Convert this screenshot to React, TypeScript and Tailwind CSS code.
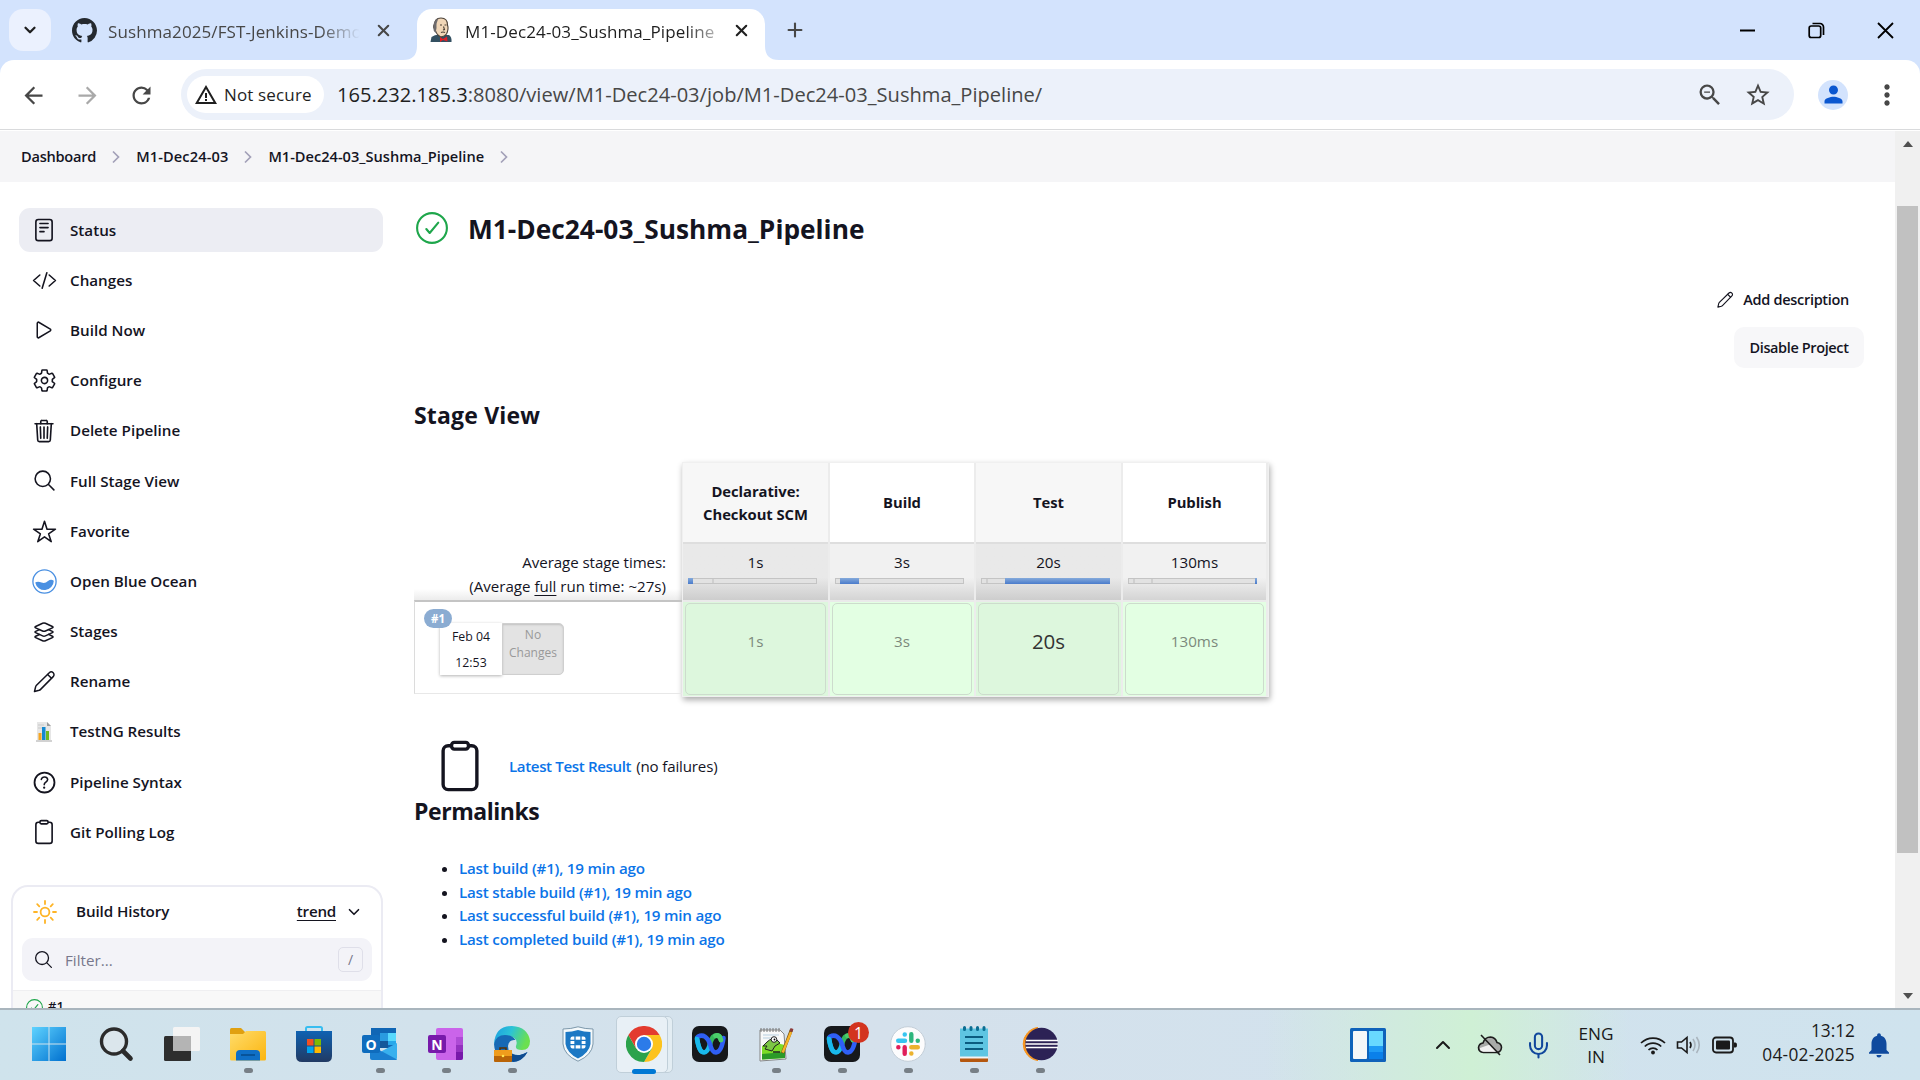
import React from "react";
import {
  IoCodeSlashOutline,
  IoPlayOutline,
  IoSettingsOutline,
  IoTrashOutline,
  IoSearchOutline,
  IoStarOutline,
  IoLayersOutline,
  IoHelpCircleOutline,
  IoClipboardOutline,
  IoReaderOutline,
} from "react-icons/io5";
import {
  MdArrowBack,
  MdArrowForward,
  MdRefresh,
  MdZoomOut,
  MdStarOutline,
  MdPerson,
  MdMoreVert,
  MdWarningAmber,
  MdNotifications,
} from "react-icons/md";
import { ChevronDown, ChevronUp, X, Plus, Mic } from "lucide-react";

/* ---------- small drawings ---------- */

function GithubMark() {
  return (
    <svg width="25" height="25" viewBox="0 0 16 16" fill="#24292f" className="shrink-0">
      <path d="M8 0C3.58 0 0 3.58 0 8c0 3.54 2.29 6.53 5.47 7.59.4.07.55-.17.55-.38 0-.19-.01-.82-.01-1.49-2.01.37-2.53-.49-2.69-.94-.09-.23-.48-.94-.82-1.13-.28-.15-.68-.52-.01-.53.63-.01 1.08.58 1.23.82.72 1.21 1.87.87 2.33.66.07-.52.28-.87.51-1.07-1.78-.2-3.64-.89-3.64-3.95 0-.87.31-1.59.82-2.15-.08-.2-.36-1.02.08-2.12 0 0 .67-.21 2.2.82.64-.18 1.32-.27 2-.27s1.36.09 2 .27c1.53-1.04 2.2-.82 2.2-.82.44 1.1.16 1.92.08 2.12.51.56.82 1.27.82 2.15 0 3.07-1.87 3.75-3.65 3.95.29.25.54.73.54 1.48 0 1.07-.01 1.93-.01 2.2 0 .21.15.46.55.38A8.01 8.01 0 0 0 16 8c0-4.42-3.58-8-8-8z" />
    </svg>
  );
}

function Butler() {
  return (
    <svg width="24" height="26" viewBox="0 0 24 26">
      <path d="M1.500 25 L2.500 20 Q7 17 12 18 L20 18 Q23 20 22.500 25 Z" fill="#335061" />
      <path d="M6 8 Q5 1 12 1 Q18.500 1 18.500 8 Q20 12 17.500 17 Q15 20.500 11 19.500 Q7 17 6 12 Q4 11 5 8Z" fill="#f0d6b7" stroke="#4b4036" strokeWidth="1.1" />
      <path d="M4.500 12 Q3.500 3 10 1 Q7 5 7.500 11 Q6.500 14 7.500 16 Q4.500 15 4.500 12Z" fill="#6d6b6d" />
      <path d="M11 8h2M15.500 8h2M14.500 9.500 l1 3 -1.500 .4M12 15.500 q2 -1 4 0" stroke="#4b4036" strokeWidth="1.100" fill="none" />
      <path d="M11 20 L14 22 L18 19.500 L18.500 24.500 L14 23 L11 25Z" fill="#e01e26" />
    </svg>
  );
}

function Pencil({ size }: { size: number }) {
  return (
    <svg width={size} height={size} viewBox="0 0 24 24" fill="none" stroke="#14141f" strokeWidth="1.5" strokeLinejoin="round" strokeLinecap="round">
      <path d="M2.500 21.500 L3.600 16.800 Q3.800 16 4.500 15.300 L17.300 2.700 A2.600 2.600 0 0 1 21.200 6.600 L8.600 19.400 Q8 20 7.100 20.300 Z" />
      <path d="M15.600 4.500 L19.500 8.300" />
    </svg>
  );
}

function BlueOcean() {
  return (
    <svg width="25" height="25" viewBox="0 0 25 25">
      <circle cx="12.500" cy="12.500" r="11.600" fill="#fff" stroke="#4a90e2" strokeWidth="1.300" />
      <path d="M3.200 13.500 Q6 12 9.500 13.600 Q13 15 16 12 Q19 9.800 21.800 11.800 A9.400 9.400 0 0 1 3.200 13.500Z" fill="#4a90e2" />
    </svg>
  );
}

function TestNg() {
  return (
    <svg width="18" height="22" viewBox="0 0 18 22">
      <path d="M2 1 H12 L16 5 V20 H2Z" fill="#e6e6e6" />
      <path d="M1 19h16v2H1z" fill="#d2d2d2" />
      <path d="M12 1 L16 5 H12Z" fill="#9b9b9b" />
      <path d="M3 4h6M3 7h5" stroke="#c8c8c8" />
      <path d="M3.500 12h3v7h-3z" fill="#f5a623" />
      <path d="M7 6h3.500v13H7z" fill="#1389d1" />
      <path d="M11 10h3v9h-3z" fill="#6fb91f" />
    </svg>
  );
}

function CheckRing({ size }: { size: number }) {
  return (
    <svg width={size} height={size} viewBox="0 0 32 32" fill="none" stroke="#1ea64b" strokeLinecap="round" strokeLinejoin="round" strokeWidth="2.1">
      <circle cx="16" cy="16" r="14.900" />
      <path d="M10.300 17 L13.700 21 L22.300 10.700" />
    </svg>
  );
}

function Sun() {
  return (
    <svg width="24" height="24" viewBox="0 0 24 24" fill="none" stroke="#feb426" strokeWidth="1.800" strokeLinecap="round">
      <circle cx="12" cy="12" r="4.400" />
      <path d="M12 1v3M12 20v3M1 12h3M20 12h3M4.200 4.200l2.100 2.100M17.700 17.700l2.100 2.100M4.200 19.800l2.100-2.100M17.700 6.300l2.100-2.100" />
    </svg>
  );
}

/* ---------- browser chrome ---------- */

function TabStrip() {
  return (
    <div className="flex h-[60px] bg-[#d3e3fd] text-[17px] text-[#474747]">
      <div className="mt-[9px] ml-[9px] flex h-[42px] w-[42px] items-center justify-center rounded-[14px] bg-[#ebf1fe] text-[#1f1f1f]">
        <ChevronDown size={18} strokeWidth={3} />
      </div>
      <div className="ml-[21px] flex w-[331px] items-center">
        <GithubMark />
        <div className="mt-[3px] ml-[11px] w-[252px] overflow-hidden whitespace-nowrap tracking-[0.1px] [mask-image:linear-gradient(90deg,#000_84%,transparent_100%)]">
          Sushma2025/FST-Jenkins-Demo
        </div>
        <X size={19} strokeWidth={2.6} className="ml-[14px] shrink-0" />
      </div>
      <svg width="14" height="60" viewBox="0 0 14 60">
        <path d="M0 60 Q14 60 14 46 V60Z" fill="#fff" />
      </svg>
      <div className="mt-[9px] flex h-[51px] w-[348px] items-center rounded-t-[15px] bg-white pb-[9px] pl-[12px] text-[#1f1f1f]">
        <Butler />
        <div className="mt-[3px] ml-[12px] w-[250px] overflow-hidden whitespace-nowrap tracking-[0.12px] [mask-image:linear-gradient(90deg,#000_88%,transparent_106%)]">
          M1-Dec24-03_Sushma_Pipeline
        </div>
        <X size={19} strokeWidth={2.6} className="ml-[17px] shrink-0" />
      </div>
      <svg width="14" height="60" viewBox="0 0 14 60">
        <path d="M14 60 Q0 60 0 46 V60Z" fill="#fff" />
      </svg>
      <div className="flex w-[32px] items-center justify-center">
        <Plus size={22} strokeWidth={2.3} />
      </div>
      <div className="ml-auto flex items-center gap-[52px] pr-[26px] text-black">
        <svg width="17" height="17" viewBox="0 0 17 17"><path d="M1 8.500h15" stroke="#000" strokeWidth="2" /></svg>
        <svg width="17" height="17" viewBox="0 0 17 17" fill="none" stroke="#000" strokeWidth="1.700">
          <rect x="1.200" y="4" width="11.500" height="11.500" rx="2" />
          <path d="M4.500 1.500H12a3.500 3.500 0 0 1 3.500 3.500v8" />
        </svg>
        <svg width="17" height="17" viewBox="0 0 17 17"><path d="M1 1l15 15M16 1L1 16" stroke="#000" strokeWidth="1.800" /></svg>
      </div>
    </div>
  );
}

function Toolbar() {
  return (
    <div className="h-[71px] bg-linear-to-b from-[#d3e3fd] from-50% to-white to-50%">
      <div className="flex h-[70px] items-center rounded-t-[14px] border-b border-[#d9dadc] bg-white text-[#474747]">
        <div className="flex w-[181px] items-center gap-[27px] pt-[1px] pl-[20px]">
          <MdArrowBack size={27} />
          <MdArrowForward size={27} color="#a9a9a9" />
          <MdRefresh size={27} />
        </div>
        <div className="flex h-[51px] w-[1613px] items-center rounded-full bg-[#ecf1fa] pl-[6px]">
          <div className="flex h-[37px] w-[137px] items-center rounded-full bg-white pl-[7px] text-[#1f1f1f]">
            <MdWarningAmber size={24} />
            <span className="ml-[6px] text-[17px] font-medium tracking-[0.15px]">Not secure</span>
          </div>
          <div className="ml-[13px] pt-[2px] text-[20.1px] whitespace-nowrap">
            <span className="text-[#1f1f1f]">165.232.185.3</span>:8080/view/M1-Dec24-03/job/M1-Dec24-03_Sushma_Pipeline/
          </div>
          <MdZoomOut size={28} className="mr-[20px] ml-auto" />
          <MdStarOutline size={28} className="mr-[22px]" />
        </div>
        <div className="ml-[24px] flex h-[30px] w-[30px] items-center justify-center rounded-full bg-[#d3e3fd]">
          <MdPerson size={27} color="#0b57d0" />
        </div>
        <MdMoreVert size={32} className="ml-[23px]" />
      </div>
    </div>
  );
}

/* ---------- page ---------- */

function Crumb({ text, spacing }: { text: string; spacing: string }) {
  return (
    <>
      <span className={spacing}>{text}</span>
      <svg width="40" height="14" viewBox="0 0 40 14" fill="none" stroke="#a2a0b8" strokeWidth="1.700">
        <path d="M17 1.500L22.500 7L17 12.500" />
      </svg>
    </>
  );
}

const items: { label: string; icon: React.ReactNode }[] = [
  { label: "Status", icon: <IoReaderOutline size={26} /> },
  { label: "Changes", icon: <IoCodeSlashOutline size={25} /> },
  { label: "Build Now", icon: <IoPlayOutline size={24} /> },
  { label: "Configure", icon: <IoSettingsOutline size={25} /> },
  { label: "Delete Pipeline", icon: <IoTrashOutline size={26} /> },
  { label: "Full Stage View", icon: <IoSearchOutline size={25} /> },
  { label: "Favorite", icon: <IoStarOutline size={25} /> },
  { label: "Open Blue Ocean", icon: <BlueOcean /> },
  { label: "Stages", icon: <IoLayersOutline size={24} /> },
  { label: "Rename", icon: <Pencil size={24} /> },
  { label: "TestNG Results", icon: <TestNg /> },
  { label: "Pipeline Syntax", icon: <IoHelpCircleOutline size={29} /> },
  { label: "Git Polling Log", icon: <IoClipboardOutline size={26} /> },
];

function Sidebar() {
  return (
    <div className="w-[414px] shrink-0 pt-[26px]">
      <div className="ml-[19px] flex w-[364px] flex-col gap-[6.2px]">
        {items.map((it, i) => (
          <div
            key={it.label}
            className={"flex h-[44px] shrink-0 items-center rounded-[11px] text-[15.2px] font-semibold " + (i === 0 ? "bg-[#ecedf3]" : "")}
          >
            <span className="mr-px flex w-[50px] justify-center">{it.icon}</span>
            {it.label}
          </div>
        ))}
      </div>
      <div className="mt-[31px] ml-[11px] h-[180px] w-[372px] rounded-[17px] border-2 border-[#ebebf3]">
        <div className="flex h-[50px] items-center pb-px pl-[20px] text-[15.2px] font-semibold tracking-[-0.1px]">
          <Sun />
          <span className="ml-[19px]">Build History</span>
          <span className="ml-auto tracking-[-0.25px] underline decoration-1 underline-offset-[3px]">trend</span>
          <ChevronDown size={18} className="mr-[18px] ml-[9px]" strokeWidth={2.2} />
        </div>
        <div className="mx-[9px] mt-px flex h-[43px] items-center rounded-[11px] bg-[#f3f3f8] pr-[9px] pl-[11px] text-[15.2px] font-medium text-[#78788c]">
          <IoSearchOutline size={21} color="#14141f" />
          <span className="ml-[11px] pt-px">Filter...</span>
          <span className="ml-auto flex h-[25px] w-[25px] items-center justify-center rounded-[5px] border border-[#dfdfe9] text-[14px] font-normal">/</span>
        </div>
        <div className="mt-[9px] flex h-[60px] border-t border-[#efeff1] bg-[#f8f8f8] pt-[8px] pl-[13px] text-[13px] font-semibold">
          <CheckRing size={17} />
          <span className="ml-[5px] leading-[15px]">#1</span>
        </div>
      </div>
    </div>
  );
}

const stages = [
  { name: "Declarative: Checkout SCM", time: "1s", start: 0, width: 5, ticks: [23] },
  { name: "Build", time: "3s", start: 5, width: 19, ticks: [] },
  { name: "Test", time: "20s", start: 24, width: 105, ticks: [4] },
  { name: "Publish", time: "130ms", start: 127, width: 2, ticks: [4, 22] },
];

function StageView() {
  return (
    <div className="flex h-[236px] items-start">
      <div className="flex w-[268px] flex-col">
        <div className="mt-[82px] h-[56px] bg-linear-to-b from-white from-80% to-[#ececec] pt-[7px] pr-[16px] text-right text-[15.1px] leading-[23.7px]">
          <span className="tracking-[-0.07px]">Average stage times:</span>
          <br />
          (Average <span className="underline underline-offset-[3px]">full</span> run time: ~27s)
        </div>
        <div className="relative h-[94px] border-t-2 border-b border-l border-t-[#c4c4c4] border-b-[#e8e8e8] border-l-[#dcdcdc]">
          <div className="mt-[21px] ml-[25px] flex h-[52px] text-center">
            <div className="w-[62px] bg-white pt-px text-[12.3px] leading-[26px] shadow-[0_1px_3px_rgba(0,0,0,0.3)]">
              Feb 04
              <br />
              12:53
            </div>
            <div className="w-[62px] rounded-r-[5px] border border-[#cfcfcf] bg-[#e3e3e3] pt-[2px] text-[12px] leading-[18px] text-[#999] shadow-[inset_0_1px_2px_rgba(0,0,0,0.15)]">
              No
              <br />
              Changes
            </div>
          </div>
          <div className="absolute top-[7px] left-[9px] flex h-[19px] w-[28px] items-center justify-center rounded-full bg-[#8bacd2] text-[11.5px] font-bold text-white">
            #1
          </div>
        </div>
      </div>
      <div className="grid w-[587px] grid-cols-[147px_146px_147px_145px] border border-[#f0f0f0] bg-white shadow-[1px_3px_6px_rgba(0,0,0,0.33)]">
        {stages.map((s, i) => (
          <div key={s.name} className={"flex flex-col border-r-2 border-[#ececec] text-center text-[15.2px] " + (i % 2 === 0 ? "bg-[#f7f7f7]" : "bg-white")}>
            <div className="flex h-[79px] items-center justify-center px-[15px] text-[14.8px] leading-[23px] font-bold tracking-[-0.05px]">{s.name}</div>
            <div className={"h-[58px] border-t-2 border-[#dedede] bg-linear-to-b from-60% pt-[7px] " + (i % 2 === 0 ? "from-[#e9e9e9] to-[#cdcdcd]" : "from-[#f1f1f1] to-[#d4d4d4]")}>
              <div className="leading-[23px]">{s.time}</div>
              <div className="relative mt-[4px] ml-[5px] h-[6px] w-[129px] border border-[#c4c4c4] bg-[#e2e2e2]">
                {s.ticks.map((t) => (
                  <div key={t} className="absolute top-0 h-[4px] w-[2px] bg-[#cfcfcf]" style={{ left: t }} />
                ))}
                <div className="absolute -top-px h-[6px] bg-linear-to-b from-[#85aadb] to-[#4a7bcb]" style={{ left: s.start - 1, width: s.width }} />
              </div>
            </div>
            <div className={"border-t-2 border-[#eaeaea] px-[2px] pt-px pb-px " + (i % 2 === 0 ? "bg-[#ddf7dd]" : "bg-[#e3ffe3]")}>
              <div
                className={
                  "flex h-[92px] items-center justify-center rounded-[5px] border border-[#cddccd] pb-[15px] " +
                  (i === 2 ? "text-[20.5px] text-[#333]" : "text-[15.2px] text-[#7c897c]")
                }
              >
                {s.time}
              </div>
            </div>
          </div>
        ))}
      </div>
    </div>
  );
}

const links = [
  "Last build (#1), 19 min ago",
  "Last stable build (#1), 19 min ago",
  "Last successful build (#1), 19 min ago",
  "Last completed build (#1), 19 min ago",
];

function Main() {
  return (
    <div className="flex flex-1 flex-col">
      <div className="flex h-[93px] items-center pl-[2px]">
        <div className="-mt-px">
          <CheckRing size={32} />
        </div>
        <h1 className="mt-[2px] ml-[20px] text-[26.3px] font-bold">M1-Dec24-03_Sushma_Pipeline</h1>
      </div>
      <div className="flex h-[47px] items-center justify-end pt-[2px] pr-[46px] text-[14.5px] font-semibold tracking-[-0.3px]">
        <Pencil size={18} />
        <span className="ml-[9px] pt-px">Add description</span>
      </div>
      <div className="mt-[5px] mr-[31px] flex h-[41px] w-[130px] items-center justify-center self-end rounded-[10px] bg-[#f7f7f9] text-[14.5px] font-semibold tracking-[-0.38px]">
        Disable Project
      </div>
      <h2 className="mt-[28px] h-[38px] text-[23px] leading-[39px] font-bold tracking-[0.18px]">Stage View</h2>
      <div className="mt-[28px]">
        <StageView />
      </div>
      <div className="mt-[38px] flex h-[59px] items-center pl-[19px] text-[15.1px]">
        <IoClipboardOutline size={54} />
        <span className="ml-[22px] pt-[2px] font-semibold tracking-[-0.37px] text-[#0b74e8]">Latest Test Result</span>
        <span className="ml-[5px] pt-[2px] tracking-[-0.15px]">(no failures)</span>
      </div>
      <h2 className="h-[34px] text-[23px] leading-[32px] font-bold tracking-[-0.45px]">Permalinks</h2>
      <ul className="mt-[28px] list-disc pl-[45px] text-[15.2px] leading-[23.7px] tracking-[-0.22px]">
        {links.map((l) => (
          <li key={l}>
            <span className="font-semibold text-[#0b74e8]">{l}</span>
          </li>
        ))}
      </ul>
    </div>
  );
}

/* ---------- taskbar ---------- */

function Windows() {
  return (
    <svg width="36" height="36" viewBox="0 0 36 36" className="mr-[3px]">
      <defs>
        <linearGradient id="win" x1="0" y1="0" x2="1" y2="1">
          <stop offset="0" stopColor="#5fd3ff" />
          <stop offset="1" stopColor="#0070cf" />
        </linearGradient>
      </defs>
      <path d="M1 1h16.500v16.500H1zM18.500 1H35v16.500H18.500zM1 18.500h16.500V35H1zM18.500 18.500H35V35H18.500z" fill="url(#win)" />
    </svg>
  );
}

function SearchGlass() {
  return (
    <svg width="36" height="36" viewBox="0 0 36 36" fill="none" stroke="#2b2b2b">
      <circle cx="16" cy="15.500" r="12.500" strokeWidth="3.400" fill="#dbe6ec" />
      <path d="M25 25l7.500 7.500" strokeWidth="4.600" strokeLinecap="round" />
    </svg>
  );
}

function TaskView() {
  return (
    <svg width="36" height="36" viewBox="0 0 36 36">
      <rect x="0" y="10" width="27" height="25" rx="1.500" fill="#2e2e2e" />
      <rect x="9" y="1" width="27" height="24" rx="1.500" fill="#f4f4f4" />
      <path d="M9 10h18v15H10.500a1.500 1.500 0 0 1-1.500-1.500z" fill="#b4b4b4" />
    </svg>
  );
}

function Folder() {
  return (
    <svg width="36" height="36" viewBox="0 0 36 36">
      <defs>
        <linearGradient id="folder" x1="0" y1="0" x2="1" y2="1">
          <stop offset="0" stopColor="#ffdc6b" />
          <stop offset="1" stopColor="#fbb50f" />
        </linearGradient>
      </defs>
      <path d="M0 3.500Q0 2 1.500 2H11l4 4v6H0z" fill="#e0a010" />
      <path d="M0 8h13l3-3h18.500Q36 5 36 6.500V33q0 1.500-1.500 1.500h-33Q0 34.500 0 33z" fill="url(#folder)" />
      <path d="M6 34.500V28q0-4 4-4h16q4 0 4 4v6.500z" fill="#0f6fc6" />
      <path d="M11 29h14" stroke="#064a8a" strokeWidth="1.500" />
    </svg>
  );
}

function Store() {
  return (
    <svg width="36" height="36" viewBox="0 0 36 36">
      <defs>
        <linearGradient id="store" x1="0" y1="0" x2="0" y2="1">
          <stop offset="0" stopColor="#0f62b2" />
          <stop offset="1" stopColor="#213a63" />
        </linearGradient>
      </defs>
      <path d="M10 7V2.500Q10 1 11.500 1h13Q26 1 26 2.500V7" fill="none" stroke="#38bdf0" strokeWidth="2" />
      <path d="M0 5h36v25q0 6-6 6H6q-6 0-6-6z" fill="url(#store)" />
      <path d="M11 13h6.500v6.500H11z" fill="#f25022" />
      <path d="M18.500 13H25v6.500h-6.500z" fill="#7fba00" />
      <path d="M11 20.500h6.500V27H11z" fill="#00a4ef" />
      <path d="M18.500 20.500H25V27h-6.500z" fill="#ffb900" />
    </svg>
  );
}

function Outlook() {
  return (
    <div className="relative h-[36px] w-[36px]">
      <svg width="36" height="36" viewBox="0 0 36 36">
        <path d="M9 2h25v20H9z" fill="#1066b5" />
        <path d="M18 7h8v8h-8z" fill="#2a9be0" />
        <path d="M26 7h8v8h-8z" fill="#58d9fd" />
        <path d="M18 15h8v7h-8z" fill="#14579a" />
        <path d="M26 15h8v4h-8z" fill="#28a8ea" />
        <path d="M35 17L20 25V34H33q2 0 2-2z" fill="#38b0ee" />
        <path d="M8 19l27 14.500Q34.500 34 33 34H10q-2 0-2-2z" fill="#1a7fd0" />
      </svg>
      <div className="absolute top-[9px] left-0 flex h-[18px] w-[18px] items-center justify-center rounded-[2px] bg-[#0f6cbd] text-[14px] font-bold text-white">O</div>
    </div>
  );
}

function OneNote() {
  return (
    <div className="relative h-[36px] w-[36px]">
      <svg width="36" height="36" viewBox="0 0 36 36">
        <rect x="8" y="2" width="27" height="32" rx="2" fill="#ca64ea" />
        <path d="M28 11h7v8h-7z" fill="#ae4bd5" />
        <path d="M28 19h7v7h-7z" fill="#9332bf" />
        <path d="M28 26h7v6q0 2-2 2h-5z" fill="#7719aa" />
      </svg>
      <div className="absolute top-[9px] left-0 flex h-[18px] w-[18px] items-center justify-center rounded-[2px] bg-[#7719aa] text-[14px] font-bold text-white">N</div>
    </div>
  );
}

function Edge() {
  return (
    <svg width="36" height="36" viewBox="0 0 36 36">
      <defs>
        <linearGradient id="edge" x1="0" y1="0" x2="1" y2="0.300">
          <stop offset="0" stopColor="#1b9de2" />
          <stop offset="0.500" stopColor="#2cc3d6" />
          <stop offset="1" stopColor="#6be04f" />
        </linearGradient>
      </defs>
      <path d="M0 18Q1 0 18 0Q34 1 36 15Q36 24 28 24Q21 24 22 20Q25 12 15 10Q6 9 0 18Z" fill="url(#edge)" />
      <path d="M0 18Q2 9 11 9Q18 9 21.500 14Q15 13 14 20Q14 30 26 29Q30 28 33.500 26Q28 36 18 36Q1 35 0 18Z" fill="#1769b5" />
      <path d="M15 25Q19 30 26 29Q30 28 33.500 26Q29 35 19 36Q15 32 15 25Z" fill="#0f4b8f" />
      <rect x="0" y="24" width="18" height="12" rx="1" fill="#b96407" />
      <path d="M0 25q0-1 1-1h16q1 0 1 1v5H0z" fill="#f09c1c" />
      <path d="M6 24v-2h6v2" stroke="#5a3000" fill="none" strokeWidth="1.500" />
      <circle cx="9" cy="30" r="1.300" fill="#ffe34d" />
    </svg>
  );
}

function Shield() {
  return (
    <svg width="32" height="36" viewBox="0 0 32 36">
      <path d="M16 .8Q23 3 31 3V18Q30 29 16 35.200Q2 29 1 18V3Q9 3 16 .8Z" fill="#f5fafc" stroke="#7d98ab" />
      <path d="M16 4Q22 6 28.500 6V18Q27 27 16 32.500Q5 27 3.500 18V6Q10 6 16 4Z" fill="#1c78c4" />
      <rect x="8.500" y="10.500" width="15" height="12" rx="2" fill="#fff" />
      <path d="M13 10v4M13 19v4M19 10v4M19 19v4M8 14.300h5M19 14.300h5M8 18.700h5M19 18.700h5M13 14.300h6v4.400h-6z" stroke="#1c78c4" strokeWidth="1.300" fill="#1c78c4" />
    </svg>
  );
}

function Chrome() {
  return (
    <svg width="36" height="36" viewBox="0 0 36 36">
      <path d="M18 9H33.600A18 18 0 0 1 18 36L25.800 22.500z" fill="#fcc31e" />
      <path d="M10.200 22.500L2.400 9A18 18 0 0 0 18 36L25.800 22.500z" fill="#2ba24c" />
      <path d="M18 9H33.600A18 18 0 0 0 2.400 9L10.200 22.500z" fill="#e33b2e" />
      <circle cx="18" cy="18" r="9" fill="#fff" />
      <circle cx="18" cy="18" r="7.200" fill="#2c7be9" />
    </svg>
  );
}

function Webex() {
  return (
    <svg width="36" height="36" viewBox="0 0 36 36" fill="none" strokeLinecap="round">
      <rect width="36" height="36" rx="7" fill="#16181b" />
      <path d="M5 12Q7 26.500 12 26.500Q16 26 18 18" stroke="#19b9ec" strokeWidth="4.600" />
      <path d="M18 18Q20 9.500 24.500 9.500Q28 9.500 29 14" stroke="#35b85c" strokeWidth="4.800" />
      <path d="M6 10.500Q14 7 18 18Q20 26.500 24 26.500Q29.500 26 31.500 12" stroke="#2f5ff5" strokeWidth="4.600" />
      <path d="M23.500 9.700Q28 8.500 29 14" stroke="#4bce6a" strokeWidth="4.800" />
      <path d="M5 13Q6.500 22 9 25" stroke="#19b9ec" strokeWidth="4.600" />
    </svg>
  );
}

function NotepadPlus() {
  return (
    <svg width="36" height="36" viewBox="0 0 36 36">
      <path d="M2 4h20l4 4 2 25-26 2z" fill="#f8f8f8" stroke="#858585" />
      <path d="M3 2v4M6 2v4M9 2v4M12 2v4M15 2v4M18 2v4M21 2v4" stroke="#777" />
      <path d="M5 9h16M5 12h12" stroke="#b7cfe0" />
      <path d="M4 20Q14 15 27 19V32L4 33.500z" fill="#7ddc28" />
      <path d="M4 28l23-2v6L4 33.500z" fill="#2c9a28" />
      <path d="M9 16q5-5 10-2l3 3-5 3-3 5-7-2 2-3-4 0z" fill="#7cc644" stroke="#222" />
      <circle cx="16" cy="13.500" r="2.800" fill="#fff" stroke="#222" />
      <circle cx="16.500" cy="13.500" r=".9" fill="#000" />
      <path d="M24.500 27L33.500 3.500" stroke="#7a5010" strokeWidth="3.200" />
      <path d="M24.700 26.500L33 6" stroke="#f5b32a" strokeWidth="2.400" />
      <path d="M33 5.500L34 2.500" stroke="#8c3b3b" strokeWidth="3" />
      <path d="M15 26l7 0" stroke="#222" strokeWidth="1.500" />
    </svg>
  );
}

function Slack() {
  return (
    <svg width="36" height="36" viewBox="0 0 36 36" strokeWidth="4.400" strokeLinecap="round">
      <circle cx="18" cy="18" r="17.300" fill="#fcfcfd" stroke="#c3ced8" strokeWidth="1" />
      <path d="M8.200 14.700H15M14.700 8.500h.1" stroke="#36c5f0" />
      <path d="M21.300 8.200V14.700M27.700 14.700h.1" stroke="#2eb67d" />
      <path d="M21.300 21.300H27.800M21.300 27.500h.1" stroke="#ecb22e" />
      <path d="M14.700 21.300V27.800M8.300 21.300h.1" stroke="#e01e5a" />
    </svg>
  );
}

function Notepad() {
  return (
    <svg width="28" height="36" viewBox="0 0 28 36">
      <path d="M0 31h28v4q0 1-1 1H1q-1 0-1-1z" fill="#b4570f" />
      <path d="M0 30h28v2.500H0z" fill="#f3f3f3" />
      <rect y="2.500" width="28" height="28" fill="#5ec5e2" />
      <path d="M5 11h18M5 17h18M5 23h18" stroke="#0b5c80" strokeWidth="2" />
      <path d="M4.500 1.500v2M11 1.500v2M17.500 1.500v2M24 1.500v2" stroke="#0b6d92" strokeWidth="3" strokeLinecap="round" />
    </svg>
  );
}

function Eclipse() {
  return (
    <svg width="36" height="36" viewBox="0 0 36 36">
      <path d="M16 1.500A16.600 16.600 0 0 0 16 34.500A18 18 0 0 1 16 1.500Z" fill="#f7941e" stroke="#f7941e" />
      <circle cx="19.500" cy="18" r="16.200" fill="#2c2255" />
      <path d="M4 14.500h32M3.500 18h32.500M4 21.500h32" stroke="#fff" strokeWidth="1.600" />
    </svg>
  );
}

const apps: { icon: React.ReactNode; dot?: boolean; active?: boolean; badge?: string }[] = [
  { icon: <Windows /> },
  { icon: <SearchGlass /> },
  { icon: <TaskView /> },
  { icon: <Folder />, dot: true },
  { icon: <Store /> },
  { icon: <Outlook />, dot: true },
  { icon: <OneNote />, dot: true },
  { icon: <Edge />, dot: true },
  { icon: <Shield /> },
  { icon: <Chrome />, active: true },
  { icon: <Webex /> },
  { icon: <NotepadPlus />, dot: true },
  { icon: <Webex />, dot: true, badge: "1" },
  { icon: <Slack />, dot: true },
  { icon: <Notepad />, dot: true },
  { icon: <Eclipse />, dot: true },
];

function Tray() {
  return (
    <div className="flex items-center text-[#1a1a1a]">
      <svg width="36" height="34" viewBox="0 0 36 34">
        <rect width="36" height="34" rx="1.500" fill="#0f62ba" />
        <rect x="3" y="3" width="14" height="28" rx="1" fill="#f5f6f8" />
        <path d="M19 3h14v15H19z" fill="#68d9ff" />
        <path d="M19 18h14v6H19z" fill="#1e9bf5" />
        <path d="M19 24h14v7H19z" fill="#0a80ea" />
      </svg>
      <ChevronUp size={24} className="ml-[45px]" strokeWidth={2} />
      <svg width="26" height="22" viewBox="0 0 26 22" className="ml-[22px]" fill="none" stroke="#1c1c1c" strokeWidth="1.600">
        <path d="M6.500 18.500Q1.500 18 1.500 13.500Q2 9.500 6 9Q8 3 13.500 3Q18.500 3.500 20 8.500Q24.500 9.500 24.500 13.500Q24 18 20 18.500Z" fill="#a9aba9" />
        <path d="M6.500 17.700Q2.500 17 3 14L13 10.500L20 17.700Z" fill="#f2f2f2" stroke="none" />
        <path d="M4 1l19 20" />
      </svg>
      <Mic size={29} className="ml-[21px]" color="#10479c" strokeWidth={1.7} />
      <div className="ml-[19px] w-[48px] text-center text-[17.2px] leading-[23px]">
        ENG
        <br />
        IN
      </div>
      <svg width="26" height="20" viewBox="0 0 26 20" className="ml-[20px]" fill="none" stroke="#1a1a1a" strokeWidth="1.700">
        <path d="M1 8A17 17 0 0 1 25 8M4.800 11.500A11.500 11.500 0 0 1 21.200 11.500M8.500 15A6.300 6.300 0 0 1 17.500 15" />
        <circle cx="13" cy="17.500" r="1.900" fill="#1a1a1a" stroke="none" />
      </svg>
      <svg width="26" height="20" viewBox="0 0 26 20" className="ml-[10px]" fill="none" stroke="#1a1a1a" strokeWidth="1.600">
        <path d="M1.500 7H5.500L11 2.500V17.500L5.500 13H1.500z" />
        <path d="M14 7Q16 10 14 13" />
        <path d="M17 4Q21 10 17 16M20.500 2Q26 10 20.500 18" stroke="#a9b4bd" />
      </svg>
      <svg width="26" height="18" viewBox="0 0 26 18" className="ml-[10px]">
        <rect x="1" y="1.500" width="20" height="15" rx="3" fill="none" stroke="#1a1a1a" strokeWidth="1.800" />
        <rect x="4" y="4.500" width="14" height="9" rx="1" fill="#1a1a1a" />
        <path d="M22 6.500h1.500q1.500 0 1.500 2.500t-1.500 2.500H22z" fill="#1a1a1a" />
      </svg>
      <div className="ml-[18px] w-[99px] pb-[4px] text-right text-[17.3px] leading-[24px] whitespace-nowrap">
        13:12
        <br />
        <span className="tracking-[0.25px]">04-02-2025</span>
      </div>
      <MdNotifications size={30} color="#0f4a9e" className="mr-[26px] ml-[9px]" />
    </div>
  );
}

function Taskbar() {
  return (
    <div className="flex h-[72px] justify-between border-t-2 border-[#a9b5bd] bg-linear-to-r from-[#cfe3ec] from-0% via-[#d5e1ec] via-45% to-[#cfe3ee]">
      <div className="flex pl-[17px]">
        {apps.map((a, i) => (
          <div key={i} className="relative flex w-[66px] items-center justify-center">
            {a.active && (
              <>
                <div className="absolute top-[6px] left-[7px] h-[57px] w-[55px] rounded-[5px] border border-[#c0cfd9] bg-[#e3edf3]" />
                <div className="absolute top-[6px] left-[5px] h-[57px] w-[52px] rounded-[5px] border border-[#c0cfd9] bg-[#e8f0f6]" />
                <div className="absolute top-[59px] left-[21px] h-[5px] w-[24px] rounded-full bg-[#0078d4]" />
              </>
            )}
            <div className={"relative " + (a.active ? "mr-[6px] -translate-y-px pl-[6px]" : "-translate-y-px")}>{a.icon}</div>
            {a.dot && <div className="absolute top-[58px] h-[5px] w-[9px] rounded-full bg-[#777f86]" />}
            {a.badge && (
              <div className="absolute top-[12px] right-[6px] flex h-[21px] w-[21px] items-center justify-center rounded-full bg-[#d3341f] text-[16px] text-white">
                {a.badge}
              </div>
            )}
          </div>
        ))}
      </div>
      <div className="flex bg-linear-to-r from-transparent from-5% via-[#cff0d5] via-35% to-transparent to-58% pl-[120px]">
        <Tray />
      </div>
    </div>
  );
}

export default function App() {
  return (
    <div className="flex h-[1080px] w-[1920px] flex-col overflow-hidden bg-white font-['Open_Sans','Noto_Sans',sans-serif] text-[#14141f]">
      <TabStrip />
      <Toolbar />
      <div className="flex h-[877px] overflow-hidden">
        <div className="flex w-[1895px] flex-col">
          <div className="flex h-[51px] shrink-0 items-center bg-[#f5f5f7] pl-[21px] text-[14.6px] font-semibold">
            <Crumb text="Dashboard" spacing="tracking-[-0.25px]" />
            <Crumb text="M1-Dec24-03" spacing="tracking-[0.12px]" />
            <Crumb text="M1-Dec24-03_Sushma_Pipeline" spacing="tracking-[0px]" />
          </div>
          <div className="flex">
            <Sidebar />
            <Main />
          </div>
        </div>
        <div className="flex w-[25px] flex-col items-center justify-between bg-[#f0f0f0]">
          <div className="mt-[10px] border-x-[5.5px] border-b-[6px] border-x-transparent border-b-[#505050]" />
          <div className="mt-[59px] h-[647px] w-[21px] bg-[#c1c1c1]" />
          <div className="mt-auto mb-[9px] border-x-[5.5px] border-t-[6px] border-x-transparent border-t-[#505050]" />
        </div>
      </div>
      <Taskbar />
    </div>
  );
}
